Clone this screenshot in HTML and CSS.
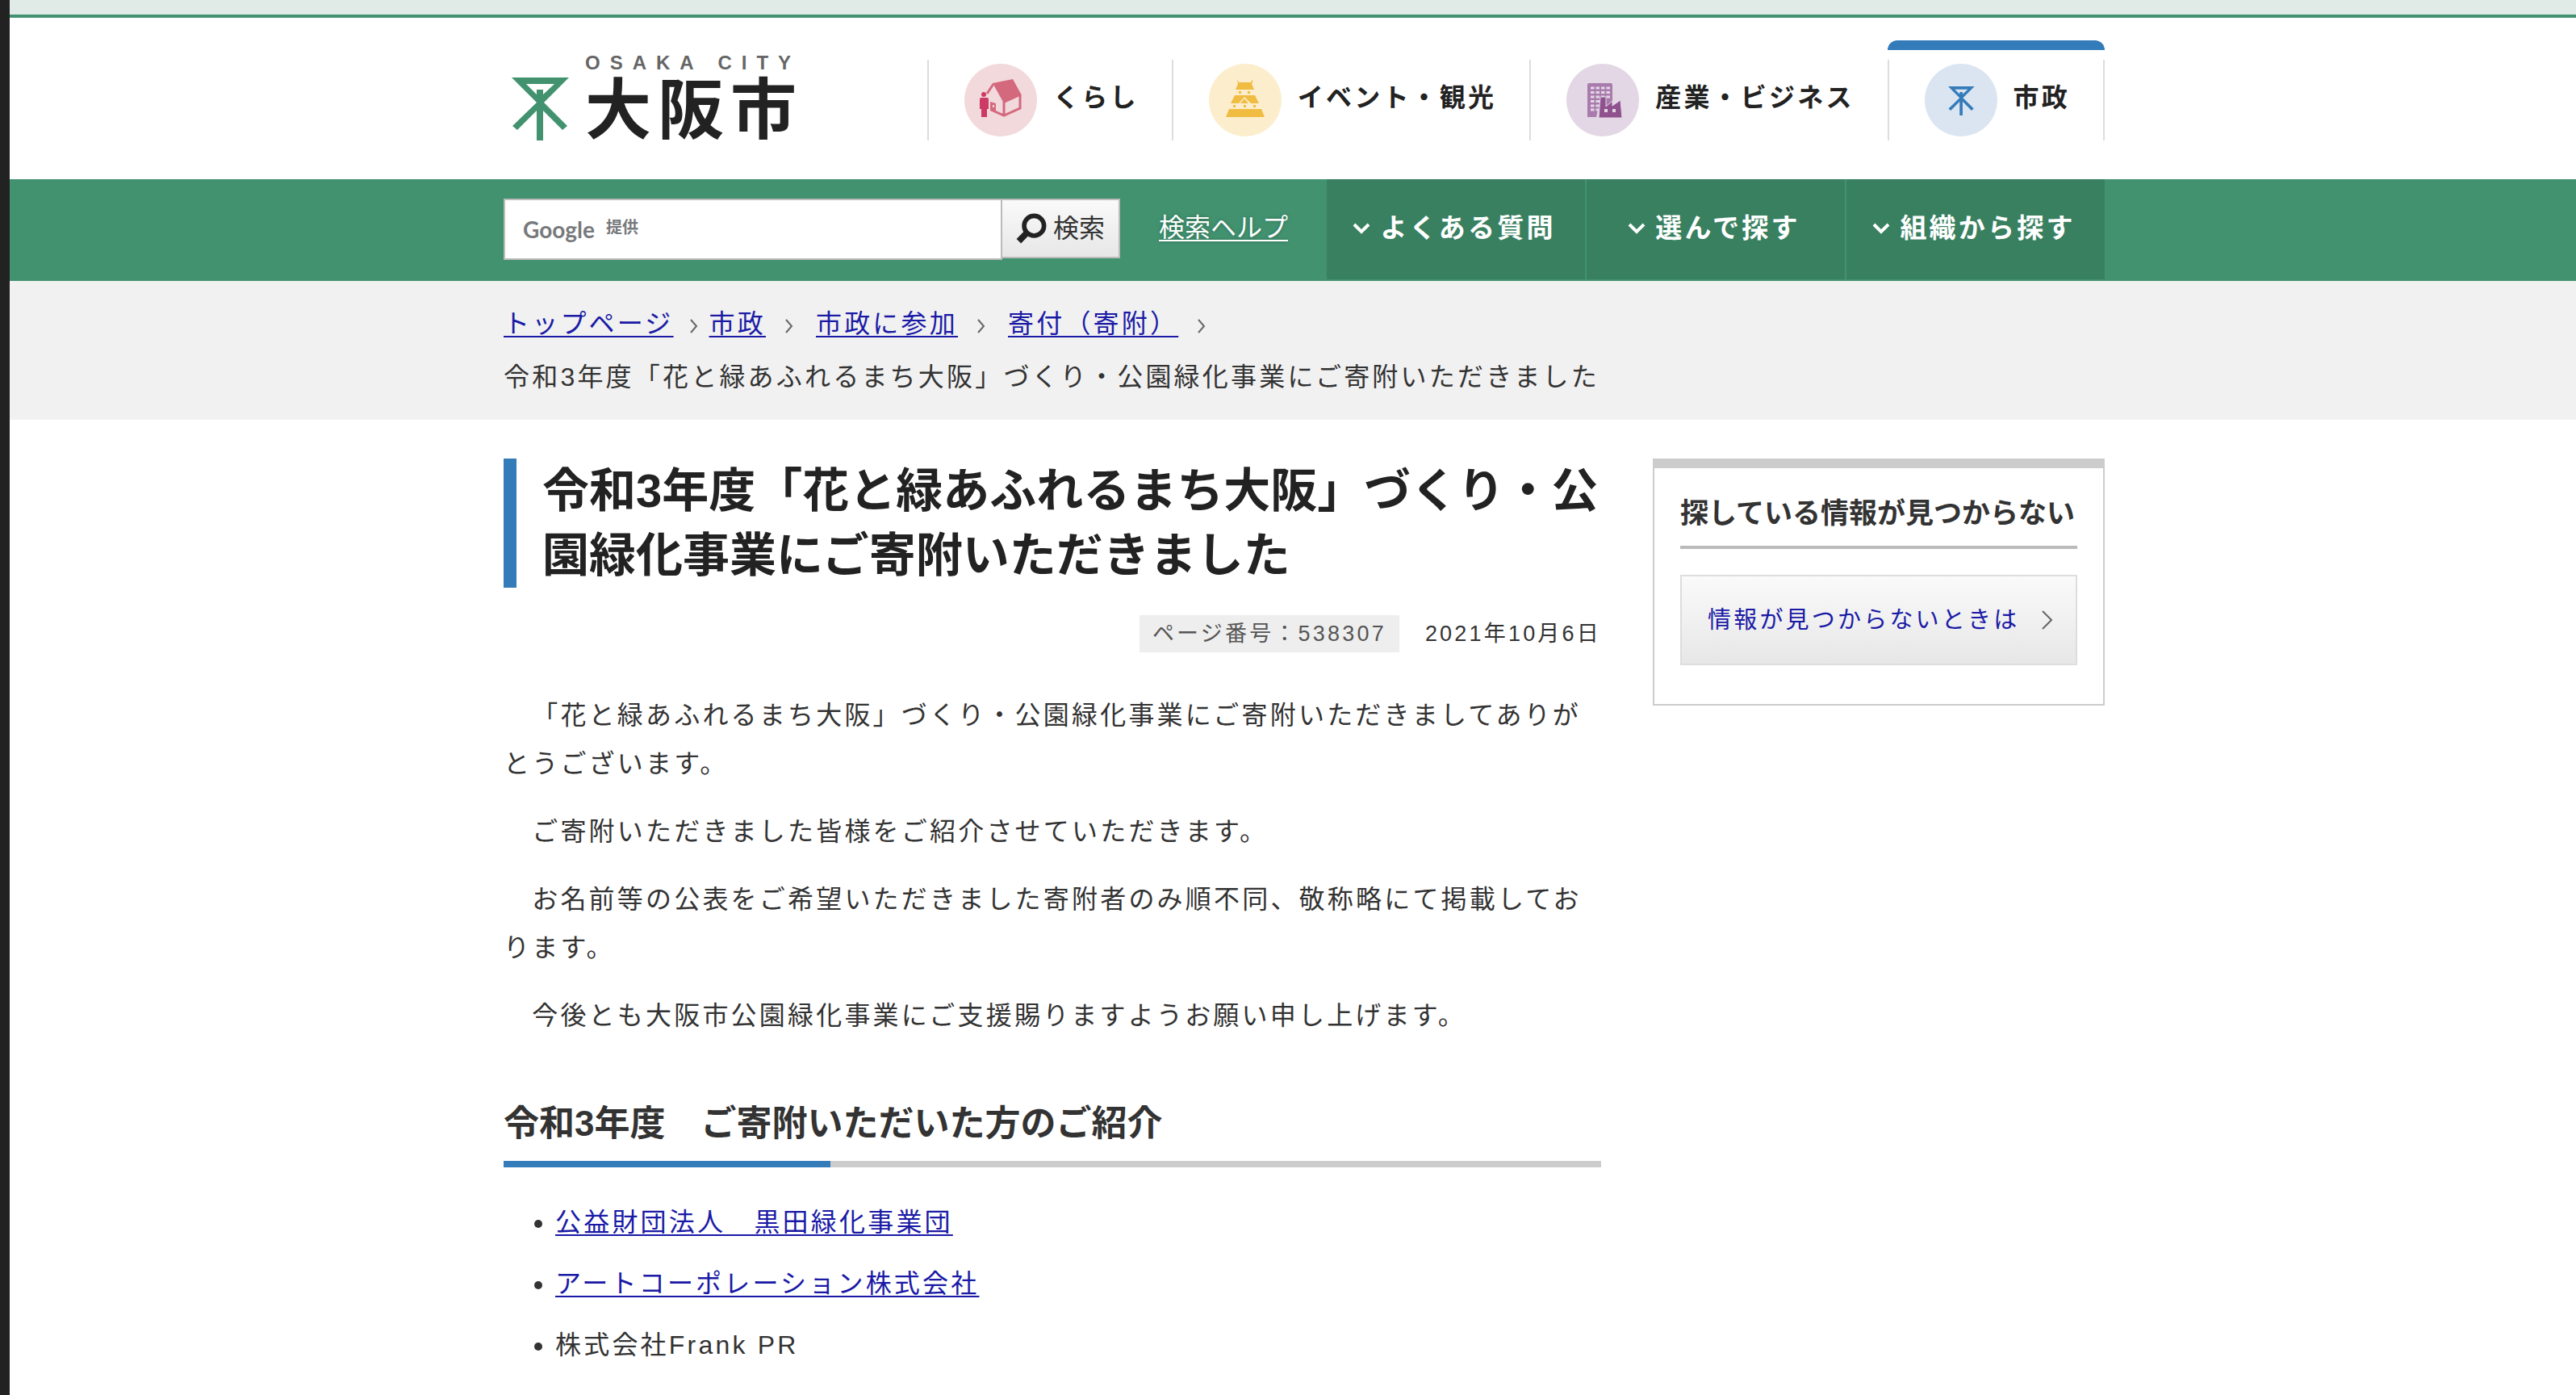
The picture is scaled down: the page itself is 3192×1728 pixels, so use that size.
FILE: index.html
```html
<!DOCTYPE html>
<html lang="ja">
<head>
<meta charset="utf-8">
<title>大阪市：令和3年度「花と緑あふれるまち大阪」づくり・公園緑化事業にご寄附いただきました</title>
<link rel="stylesheet" href="styles.css">
</head>
<body>
<div class="topbar"></div>
<header class="header wrap">
  <a class="logo" href="#">
    <svg class="logo-mark" viewBox="0 0 71 78" aria-hidden="true">
      <path fill="#429270" fill-rule="evenodd" d="M0 0H71L40 31L69 60L63 65L39 41V78H31V41L7 65L1 60L31 31ZM18 8L31 21V15H39V21L53 8Z"/>
    </svg>
    <span class="logo-text">
      <span class="logo-en">OSAKA CITY</span>
      <span class="logo-ja">大阪市</span>
    </span>
  </a>
  <nav class="nav">
    <a class="nav-item" href="#">
      <svg class="nav-icon" viewBox="0 0 90 90" aria-hidden="true">
        <circle cx="45" cy="45" r="45" fill="#f2d9dc"/>
        <path fill="#d4697e" d="M35 24L60 19L71 39L49 49Z"/>
        <path fill="none" stroke="#d4697e" stroke-width="3" d="M36 25L28 37M49 47V65M69 39V55L49 64L33 57"/>
        <path fill="#d4697e" fill-rule="evenodd" d="M32 47L39 49V60L32 58ZM35 51V54H37V51Z"/>
        <circle cx="24" cy="38" r="3" fill="#cc3a65"/>
        <path fill="#cc3a65" d="M19 44Q19 42 21 42H28Q30 42 30 44V56H28V66H21V56H19Z"/>
      </svg>
      <span class="nav-label">くらし</span>
    </a>
    <a class="nav-item" href="#">
      <svg class="nav-icon" viewBox="0 0 90 90" aria-hidden="true">
        <circle cx="45" cy="45" r="45" fill="#fceecd"/>
        <path fill="#f0bc42" d="M35 19L37 23H52L54 19V23L53 25L56 32H33L36 25ZM37 34H40V37H37ZM48 34H51V37H48ZM32 39H57L62 49H52L44 41L37 49H27ZM39 49L44 43L49 49ZM30 51H33V54H30ZM43 51H46V54H43ZM55 51H58V54H55ZM25 56H65L69 66H21Z"/>
      </svg>
      <span class="nav-label">イベント・観光</span>
    </a>
    <a class="nav-item" href="#">
      <svg class="nav-icon" viewBox="0 0 90 90" aria-hidden="true">
        <circle cx="45" cy="45" r="45" fill="#e3d7e5"/>
        <path fill="#a97bad" d="M26 26Q26 24 28 24H55Q57 24 57 26V48L39 57L37 66H26Z"/>
        <path stroke="#e3d7e5" stroke-width="3" stroke-dasharray="4.500 2" d="M30 30H54M30 35.500H54M30 41H54M30 46.500H41M30 52H41M30 57H41"/>
        <path fill="#90518f" stroke="#e3d7e5" stroke-width="1" d="M42 41H49V53L57 46V52L67 45L69 67H40Z"/>
        <path fill="#e3d7e5" d="M47 56H51V60H47ZM57 56H61V60H57Z"/>
      </svg>
      <span class="nav-label">産業・ビジネス</span>
    </a>
    <a class="nav-item nav-current" href="#" aria-current="page">
      <svg class="nav-icon" viewBox="0 0 90 90" aria-hidden="true">
        <circle cx="45" cy="45" r="45" fill="#dbe5f1"/>
        <path fill="#347bba" fill-rule="evenodd" transform="translate(29 28) scale(.46)" d="M0 0H71L40 31L69 60L63 65L39 41V78H31V41L7 65L1 60L31 31ZM18 8L31 21V15H39V21L53 8Z"/>
      </svg>
      <span class="nav-label">市政</span>
    </a>
  </nav>
</header>

<div class="bar">
  <div class="bar-inner wrap">
    <form class="search" action="#">
      <span class="field">
        <input class="search-input" id="q" type="text">
        <label class="credit" for="q"><b class="google">Google</b>提供</label>
      </span>
      <button class="search-btn" type="submit">
        <svg class="glass" viewBox="0 0 34 34" aria-hidden="true">
          <circle cx="20" cy="14" r="11" fill="none" stroke="#222" stroke-width="5"/>
          <path d="M12 22L3 31" stroke="#222" stroke-width="7"/>
        </svg>検索
      </button>
    </form>
    <a class="help" href="#">検索ヘルプ</a>
    <div class="menus">
      <button class="menu" type="button"><svg class="down" viewBox="0 0 22 14" aria-hidden="true"><path d="M2 2L11 11L20 2"/></svg>よくある質問</button>
      <button class="menu" type="button"><svg class="down" viewBox="0 0 22 14" aria-hidden="true"><path d="M2 2L11 11L20 2"/></svg>選んで探す</button>
      <button class="menu" type="button"><svg class="down" viewBox="0 0 22 14" aria-hidden="true"><path d="M2 2L11 11L20 2"/></svg>組織から探す</button>
    </div>
  </div>
</div>

<nav class="crumbs" aria-label="現在位置">
  <ol class="crumb-list wrap">
    <li class="crumb crumb-top"><a href="#">トップページ</a><svg class="chev" viewBox="0 0 10 18" aria-hidden="true"><path d="M1 1L8 9L1 17"/></svg></li>
    <li class="crumb"><a href="#">市政</a><svg class="chev" viewBox="0 0 10 18" aria-hidden="true"><path d="M1 1L8 9L1 17"/></svg></li>
    <li class="crumb"><a href="#">市政に参加</a><svg class="chev" viewBox="0 0 10 18" aria-hidden="true"><path d="M1 1L8 9L1 17"/></svg></li>
    <li class="crumb"><a href="#">寄付（寄附）</a><svg class="chev" viewBox="0 0 10 18" aria-hidden="true"><path d="M1 1L8 9L1 17"/></svg></li>
    <li class="crumb crumb-here">令和3年度「花と緑あふれるまち大阪」づくり・公園緑化事業にご寄附いただきました</li>
  </ol>
</nav>

<div class="page wrap">
  <main class="main">
    <h1 class="title">令和3年度「花と緑あふれるまち大阪」づくり・公園緑化事業にご寄附いただきました</h1>
    <div class="meta">
      <span class="page-no">ページ番号：538307</span>
      <time datetime="2021-10-06">2021年10月6日</time>
    </div>
    <div class="text">
      <p>　「花と緑あふれるまち大阪」づくり・公園緑化事業にご寄附いただきましてありがとうございます。</p>
      <p>　ご寄附いただきました皆様をご紹介させていただきます。</p>
      <p>　お名前等の公表をご希望いただきました寄附者のみ順不同、敬称略にて掲載しております。</p>
      <p>　今後とも大阪市公園緑化事業にご支援賜りますようお願い申し上げます。</p>
    </div>
    <h2 class="section">令和3年度　ご寄附いただいた方のご紹介</h2>
    <ul class="donors">
      <li><a href="#">公益財団法人　黒田緑化事業団</a></li>
      <li><a href="#">アートコーポレーション株式会社</a></li>
      <li>株式会社Frank PR</li>
    </ul>
  </main>
  <aside class="side">
    <h2 class="side-title">探している情報が見つからない</h2>
    <a class="side-link" href="#">情報が見つからないときは<svg class="side-chev" viewBox="0 0 14 24" aria-hidden="true"><path d="M1 1L12 12L1 23"/></svg></a>
  </aside>
</div>
</body>
</html>
```
FILE: styles.css
```css
* {
  box-sizing: border-box;
}

body {
  min-height: 100vh;
  margin: 0;
  border-left: 12px solid #222;
  background: #fff;
  color: #333;
  font: 32px/60px "Liberation Sans", "Noto Sans CJK JP", sans-serif;
  letter-spacing: 0.1em;
  text-spacing-trim: space-all;
}

a {
  color: #1a1aa6;
  text-underline-offset: 4px;
  text-decoration-thickness: 2px;
}

h1, h2, p, ul, ol {
  margin: 0;
  padding: 0;
}

button, input {
  font: inherit;
  letter-spacing: inherit;
  border-radius: 0;
}

.wrap {
  width: 100%;
  max-width: 2012px;
  margin: 0 auto;
  padding-left: 28px;
}

.topbar {
  height: 22px;
  border-bottom: 4px solid #429270;
  background: #e0ebe8;
}

/* header */
.header {
  display: flex;
  justify-content: space-between;
  align-items: flex-start;
  height: 200px;
}

.logo {
  display: flex;
  align-items: flex-end;
  gap: 20px;
  margin-top: 44px;
  padding-left: 10px;
  color: #222;
  text-decoration: none;
}

.logo-mark {
  width: 71px;
  height: 78px;
  margin-bottom: 10px;
}

.logo-text {
  display: flex;
  flex-direction: column;
}

.logo-en {
  color: #666;
  font-size: 24px;
  font-weight: bold;
  line-height: 24px;
  letter-spacing: 12px;
  white-space: nowrap;
}

.logo-ja {
  font-size: 82px;
  font-weight: bold;
  line-height: 94px;
  letter-spacing: 8px;
}

.nav {
  display: flex;
  padding-top: 28px;
}

.nav-item {
  display: flex;
  align-items: center;
  gap: 20px;
  height: 100px;
  margin-top: 24px;
  padding: 0 41px 0 44px;
  border-left: 2px solid #ddd;
  color: #222;
  font-weight: bold;
  text-decoration: none;
  white-space: nowrap;
}

.nav-label {
  padding-bottom: 6px;
}

.nav-current {
  position: relative;
  border-right: 2px solid #ddd;
}

.nav-current::before {
  content: "";
  position: absolute;
  top: -24px;
  left: -2px;
  right: -2px;
  height: 12px;
  border-radius: 12px 12px 0 0;
  background: #347bba;
}

.nav-icon {
  width: 90px;
  height: 90px;
}

/* search bar */
.bar {
  background: #429270;
}

.bar-inner {
  display: flex;
  align-items: flex-start;
  height: 126px;
}

.search {
  display: flex;
  align-items: flex-start;
  margin-top: 24px;
  letter-spacing: 0;
}

.field {
  position: relative;
}

.search-input {
  display: block;
  width: 618px;
  height: 76px;
  padding: 0 24px;
  border: 2px solid #bbb;
  background: #fff;
}

.credit {
  position: absolute;
  top: 6px;
  left: 24px;
  color: #77797c;
  font-size: 20px;
  font-weight: bold;
  pointer-events: none;
}

.google {
  margin-right: 14px;
  font: bold 28px/60px Lato, sans-serif;
  vertical-align: middle;
}

.search-btn {
  display: flex;
  align-items: center;
  gap: 8px;
  height: 74px;
  padding: 0 17px;
  border: 2px solid #bbb;
  border-left: 0;
  background: linear-gradient(#fafafa, #e7e7e7);
  color: #333;
}

.glass {
  width: 38px;
  height: 38px;
}

.help {
  margin: 30px 0 0 48px;
  color: #fff;
  letter-spacing: 0;
  text-shadow: 0 0 4px #2b6b50;
}

.menus {
  display: grid;
  grid-template-columns: repeat(3, 1fr);
  gap: 2px;
  width: 964px;
  margin-left: auto;
}

.menu {
  display: flex;
  justify-content: center;
  align-items: center;
  gap: 12px;
  height: 124px;
  padding: 0 4px 2px 0;
  border: 0;
  background: #388060;
  color: #fff;
  font-size: 33px;
  font-weight: bold;
}

.down {
  width: 22px;
  height: 14px;
  fill: none;
  stroke: #fff;
  stroke-width: 4;
}

/* breadcrumbs */
.crumbs {
  padding: 20px 0;
  background: #f1f1f1;
}

.crumb-list {
  display: flex;
  flex-wrap: wrap;
  list-style: none;
  padding-left: 28px;
}

.crumb {
  display: flex;
  align-items: center;
  gap: 24px;
  height: 66px;
  margin-right: 28px;
}

.crumb-top {
  gap: 20px;
  margin-right: 14px;
}

.crumb-here {
  flex: 0 0 100%;
  margin: 0;
}

.chev {
  width: 10px;
  height: 18px;
  margin-top: 6px;
  fill: none;
  stroke: #666;
  stroke-width: 2;
}

/* content */
.page {
  display: grid;
  grid-template-columns: 1360px 560px;
  justify-content: space-between;
  align-items: start;
  padding-top: 48px;
}

.title {
  padding-left: 32px;
  border-left: 16px solid #347bba;
  color: #222;
  font-size: 58px;
  line-height: 80px;
  letter-spacing: 0;
}

.meta {
  display: flex;
  justify-content: flex-end;
  align-items: center;
  gap: 32px;
  margin: 34px 0 48px;
  font-size: 27px;
  line-height: 46px;
}

.page-no {
  padding: 0 16px;
  background: #eee;
  color: #555;
}

.text p {
  margin-bottom: 24px;
}

.section {
  margin-top: 64px;
  padding-bottom: 6px;
  border-bottom: 8px solid;
  border-image: linear-gradient(90deg, #347bba 30%, #ccc 30%) 8;
  font-size: 44px;
  line-height: 80px;
  letter-spacing: 0;
}

.donors {
  margin-top: 38px;
  padding-left: 64px;
}

.donors li {
  margin-bottom: 16px;
}

.side {
  padding: 26px 32px 48px;
  border: 2px solid #ccc;
  border-top-width: 12px;
}

.side-title {
  margin-bottom: 32px;
  padding-bottom: 10px;
  border-bottom: 4px solid #bbb;
  font-size: 35px;
  letter-spacing: 0;
}

.side-link {
  display: flex;
  align-items: center;
  justify-content: space-between;
  height: 112px;
  padding: 0 28px 0 32px;
  border: 2px solid #ddd;
  background: linear-gradient(#fafafa, #e7e7e7);
  font-size: 29px;
  text-decoration: none;
  white-space: nowrap;
}

.side-chev {
  width: 14px;
  height: 24px;
  fill: none;
  stroke: #666;
  stroke-width: 2;
}
```
